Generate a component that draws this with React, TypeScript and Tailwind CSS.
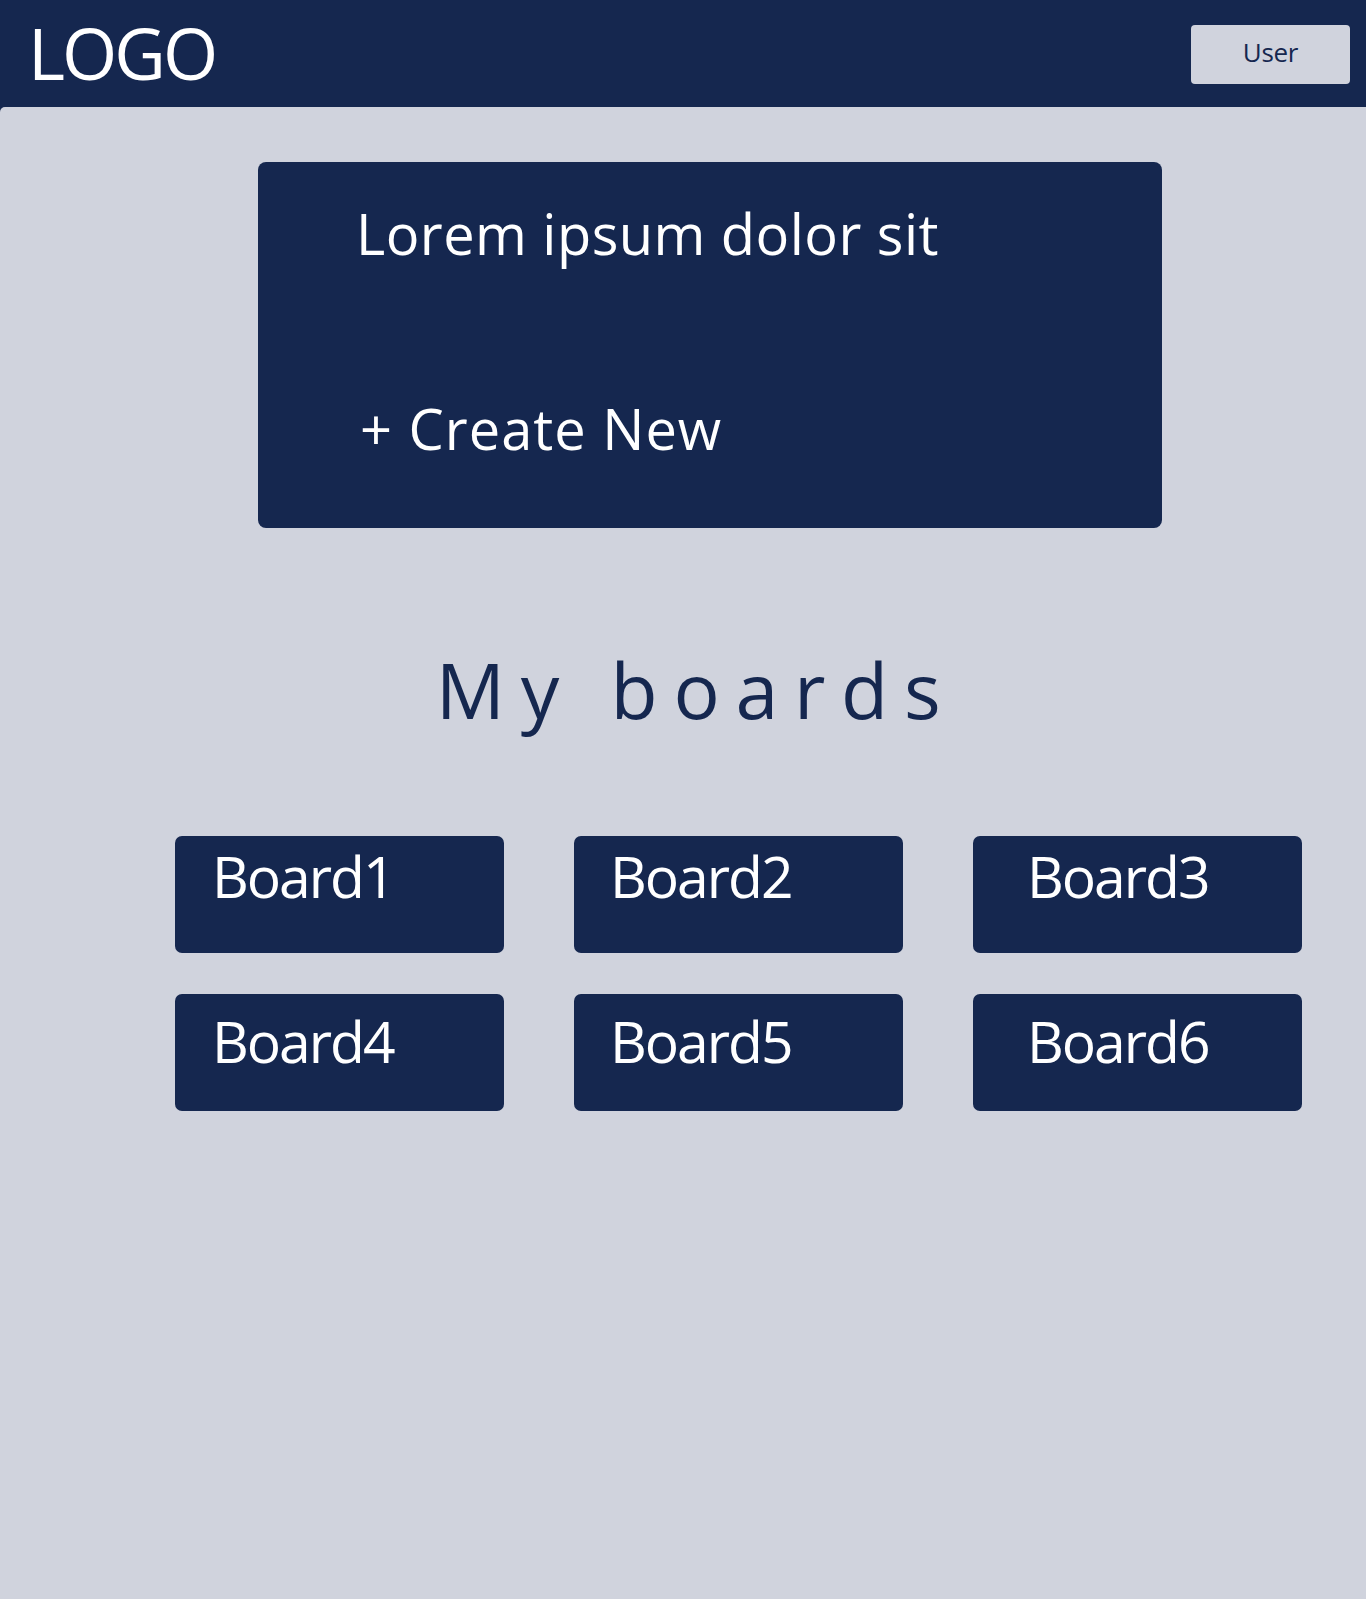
import React from "react";

const boards = [
  { name: "Board1", pad: "pl-[37px] pt-[12px]" },
  { name: "Board2", pad: "pl-[36px] pt-[12px]" },
  { name: "Board3", pad: "pl-[54px] pt-[12px]" },
  { name: "Board4", pad: "pl-[37px] pt-[19px]" },
  { name: "Board5", pad: "pl-[36px] pt-[19px]" },
  { name: "Board6", pad: "pl-[54px] pt-[19px]" },
];

const App: React.FC = () => {
  return (
    <div className="min-h-[1599px] w-full bg-[#15274f] font-['Open_Sans',sans-serif] flex flex-col">
      <header className="h-[107px] flex justify-between items-start">
        <div className="pl-[28px] pt-[17px] text-[71px] leading-none text-white tracking-[-3px]">LOGO</div>
        <button className="mt-[25px] mr-[16px] w-[159px] h-[59px] rounded-[4px] bg-[#d0d3dd] pb-[5px] text-[26px] text-[#15274f] tracking-[-0.3px] flex items-center justify-center">
          User
        </button>
      </header>

      <main className="flex-1 bg-[#d0d3dd] rounded-tl-[5px] pt-[55px] flex flex-col">
        <section className="ml-[258px] w-[904px] h-[366px] rounded-[8px] bg-[#15274f] pl-[98px] pt-[43px] text-white text-[56px] leading-none">
          <p className="tracking-[0.45px]">Lorem ipsum dolor sit</p>
          <p className="mt-[139px] pl-[4px] tracking-[1px]">+ Create New</p>
        </section>

        <h2 className="mt-[123px] text-center pl-[26px] text-[77px] leading-none text-[#15274f] tracking-[15.7px]">
          My boards
        </h2>

        <div className="mt-[108px] ml-[175px] w-[1127px] grid grid-cols-3 gap-x-[70px] gap-y-[41px]">
          {boards.map((b) => (
            <div
              key={b.name}
              className={`h-[117px] rounded-[7px] bg-[#15274f] text-white text-[57px] leading-none tracking-[-2px] ${b.pad}`}
            >
              {b.name}
            </div>
          ))}
        </div>
      </main>
    </div>
  );
};

export default App;
